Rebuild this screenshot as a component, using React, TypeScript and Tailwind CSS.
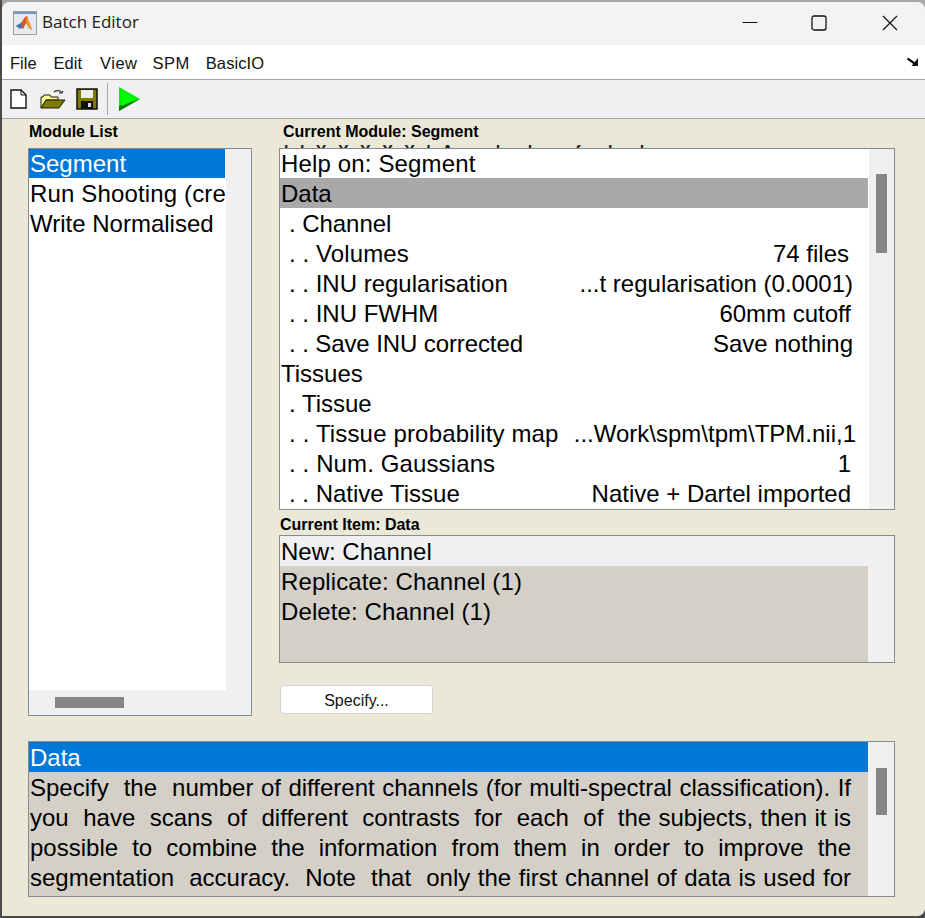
const font = 'font-["Liberation_Sans",Arial,sans-serif]'

const rows = [
  { label: '. Channel', indent: 'pl-[9px]', track: 'tracking-[-0.05px]' },
  { label: '. . Volumes', value: '74 files', pad: 'pr-[19px]', indent: 'pl-[9px]', track: 'tracking-[0.1px]' },
  { label: '. . INU regularisation', value: '...t regularisation (0.0001)', pad: 'pr-[15px]', indent: 'pl-[9px]', track: '' },
  { label: '. . INU FWHM', value: '60mm cutoff', pad: 'pr-[17px]', indent: 'pl-[9px]', track: '' },
  { label: '. . Save INU corrected', value: 'Save nothing', pad: 'pr-[15px]', indent: 'pl-[9px]', track: 'tracking-[-0.1px]' },
  { label: 'Tissues', indent: 'pl-[1px]', track: '' },
  { label: '. Tissue', indent: 'pl-[9px]', track: '' },
  { label: '. . Tissue probability map', value: '...Work\\spm\\tpm\\TPM.nii,1', pad: 'pr-[12px]', indent: 'pl-[9px]', track: 'tracking-[0.16px]' },
  { label: '. . Num. Gaussians', value: '1', pad: 'pr-[17px]', indent: 'pl-[9px]', track: 'tracking-[0.12px]' },
  { label: '. . Native Tissue', value: 'Native + Dartel imported', pad: 'pr-[17px]', indent: 'pl-[9px]', track: '' },
]

// the uneven gaps come from the justified text in the original control
const helpLines = [
  'Specify\u00a0 the\u00a0 number of different channels (for multi-spectral classification). If',
  'you\u00a0 have\u00a0 scans\u00a0 of\u00a0 different\u00a0 contrasts\u00a0 for\u00a0 each\u00a0 of\u00a0 the subjects, then it is',
  'possible to combine the information from them in order to improve the',
  'segmentation\u00a0 accuracy.\u00a0 Note\u00a0 that\u00a0 only the first channel of data is used for',
]

function MatlabLogo() {
  return (
    <svg width="24" height="24" viewBox="0 0 24 24">
      <rect x="0.5" y="0.5" width="23" height="23" fill="#e4eaf0" stroke="#a0a0a0" />
      <rect x="1" y="1" width="22" height="2" fill="#6f97bd" />
      <path d="M3 15l5-3 4-6 2-1 5 14-3-2-3-5-3 6z" fill="#d8561c" />
      <path d="M3 15l5-3 2 2-3 4z" fill="#3f77b5" />
      <path d="M14 5l5 14-3-2-3-6z" fill="#f29a2c" />
    </svg>
  )
}

export default function App() {
  return (
    <div className={`${font} w-[925px] h-[918px] bg-[#4a4a4a] overflow-hidden text-black`}>
      <div className="h-[916px] w-[923px] ml-[2px] pt-[2px] bg-[#a8a8a8] rounded-br-[8px]">
        <div className="h-[914px] rounded-t-[8px] rounded-br-[8px] overflow-hidden flex flex-col bg-[#ebe8d8]">
          {/* title bar */}
          <div className="h-[43px] shrink-0 bg-[#f3f3f3] flex items-center pl-[11px] pb-[2px]">
            <MatlabLogo />
            <span className='ml-[5px] mb-[2px] text-[17px] text-[#1a1a1a] font-["Open_Sans",sans-serif]'>Batch Editor</span>
            <div className="ml-auto flex items-center">
              <svg width="16" height="16" viewBox="0 0 16 16" className="mr-[53px]">
                <path d="M0.5 7.5h15" stroke="#111" strokeWidth="1" />
              </svg>
              <svg width="16" height="16" viewBox="0 0 16 16" className="mr-[55px]">
                <rect x="1" y="1" width="14" height="14" rx="2" fill="none" stroke="#111" strokeWidth="1.3" />
              </svg>
              <svg width="16" height="16" viewBox="0 0 16 16" className="mr-[27px]">
                <path d="M1 1l14 14M15 1L1 15" stroke="#111" strokeWidth="1.2" />
              </svg>
            </div>
          </div>

          {/* menu bar */}
          <div className="h-[35px] shrink-0 bg-white border-b border-[#a3a3a3] flex items-center pl-[8px] pr-[6px] pt-[3px] text-[16.5px] text-[#111]">
            <span className="mr-[17px]">File</span>
            <span className="mr-[18px]">Edit</span>
            <span className="mr-[15px] tracking-[0.5px]">View</span>
            <span className="mr-[16px] tracking-[0.5px]">SPM</span>
            <span className="tracking-[0.1px]">BasicIO</span>
            <svg width="12" height="10" viewBox="0 0 12 10" className="ml-auto mb-[4px]">
              <path d="M0.5 1.5l7 5" stroke="#111" strokeWidth="2.2" fill="none" />
              <path d="M11 1v8H4.500z" fill="#111" />
            </svg>
          </div>

          {/* toolbar */}
          <div className="h-[39px] shrink-0 bg-[#f0f0f0] border-b border-[#a3a3a3] flex items-center pl-[7px]">
            <svg width="20" height="22" viewBox="0 0 20 22">
              <path d="M2 2h10l5 5v13H2z" fill="#fff" stroke="#111" strokeWidth="1.4" />
              <path d="M12 2v5h5" fill="none" stroke="#111" strokeWidth="1" />
            </svg>
            <svg width="26" height="22" viewBox="0 0 26 22" className="ml-[11px]">
              <path d="M1 20V9h2l1-2h6l1 2h7v3H6z" fill="#ffff99" stroke="#1f1f00" strokeWidth="1" />
              <path d="M1 20l5-8h19l-6 8z" fill="#7f7a00" stroke="#1f1f00" strokeWidth="1" />
              <path d="M14 4c3-2 6-2 8 1M22 5l1-2M22 5l-3 0" fill="none" stroke="#333" strokeWidth="1.2" />
            </svg>
            <svg width="22" height="22" viewBox="0 0 22 22" className="ml-[10px]">
              <rect x="1" y="1" width="20" height="20" fill="#7f7a00" stroke="#111" strokeWidth="1.5" />
              <rect x="5" y="2" width="12" height="8" fill="#efefef" />
              <rect x="5" y="13" width="12" height="8" fill="#111" />
              <rect x="12" y="15" width="3" height="4" fill="#ddd" />
            </svg>
            <div className="w-px h-[32px] bg-[#a8a8a8] ml-[9px]" />
            <svg width="24" height="26" viewBox="0 0 24 26" className="ml-[10px]">
              <path d="M1 1l21 12L1 25z" fill="#00ee00" />
              <path d="M1 25l21-12L1 20z" fill="#0a7a0a" />
              <path d="M4 5l14 8L4 20z" fill="#00ff00" />
            </svg>
          </div>

          {/* body */}
          <div className="flex-1 pl-[26px] flex flex-col">
            <div className="flex">
              {/* module list */}
              <div className="w-[224px] shrink-0">
                <div className="h-[29px] pt-[4px] text-[16px] font-bold leading-[18px] pl-px">Module List</div>
                <div className="h-[568px] border border-[#878a93] bg-[#f0f0f0] flex flex-col">
                  <div className="w-[197px] h-[541px] bg-white text-[24px] leading-[32px] shrink-0">
                    <div className="w-[196px] pl-px bg-[#0078d7] text-white h-[29px] leading-[30px]">Segment</div>
                    <div className="h-[30px] pl-px whitespace-nowrap overflow-hidden tracking-[0.15px]">Run Shooting (cre</div>
                    <div className="h-[30px] pl-px whitespace-nowrap overflow-hidden">Write Normalised</div>
                  </div>
                  <div className="pt-[7px] pl-[26px]">
                    <div className="w-[69px] h-[11px] bg-[#868686]" />
                  </div>
                </div>
              </div>

              {/* current module + item */}
              <div className="w-[616px] ml-[27px] shrink-0">
                <div className="h-[29px] pt-[4px] text-[16px] font-bold leading-[18px] pl-[4px] relative overflow-hidden">
                  Current Module: Segment
                  <span className="absolute left-[5px] top-[24px] text-[16px] font-bold tracking-[3.5px] leading-[18px] whitespace-nowrap text-[#222]">{"l l X X X X X l A . . l . l . . f . l . l"}</span>
                </div>
                <div className="h-[362px] border border-[#878a93] bg-white flex text-[24px] leading-[32px] overflow-hidden">
                  <div className="flex-1 min-w-0 overflow-hidden pr-px">
                    <div className="h-[29px] pl-px leading-[30px] tracking-[0.15px]">Help on: Segment</div>
                    <div className="h-[30px] pl-px bg-[#a9a9a9]">Data</div>
                    {rows.map(r => (
                      <div key={r.label} className={`h-[30px] flex justify-between whitespace-nowrap ${r.indent} ${r.pad ?? ''}`}>
                        <span className={r.track}>{r.label}</span>
                        {r.value && <span>{r.value}</span>}
                      </div>
                    ))}
                  </div>
                  <div className="w-[25px] shrink-0 bg-[#f0f0f0] pl-[7px] pt-[25px]">
                    <div className="w-[11px] h-[79px] bg-[#868686]" />
                  </div>
                </div>

                <div className="h-[25px] pt-[6px] text-[16px] font-bold leading-[18px] pl-px">Current Item: Data</div>
                <div className="h-[128px] border border-[#878a93] bg-[#f0f0f0] flex text-[24px] leading-[32px]">
                  <div className="flex-1 flex flex-col">
                    <div className="h-[30px] pl-px bg-[#f0f0f0]">New: Channel</div>
                    <div className="flex-1 bg-[#d4d0c8]">
                      <div className="h-[30px] pl-px tracking-[0.1px]">Replicate: Channel (1)</div>
                      <div className="h-[30px] pl-px tracking-[0.1px]">Delete: Channel (1)</div>
                    </div>
                  </div>
                  <div className="w-[26px] shrink-0 bg-[#f0f0f0]" />
                </div>

                <button className="mt-[22px] ml-px w-[153px] h-[29px] bg-white border border-[#d4d4d4] rounded-[3px] text-[16px] text-[#111] leading-[30px] block">
                  Specify...
                </button>
              </div>
            </div>

            {/* help text */}
            <div className="mt-[25px] w-[867px] h-[156px] border border-[#878a93] flex text-[24px] leading-[32px] bg-[#d4d0c8]">
              <div className="flex-1 min-w-0 overflow-hidden">
                <div className="h-[30px] pl-[1px] bg-[#0078d7] text-white">Data</div>
                {helpLines.map(line => (
                  <div key={line} className="h-[30px] pl-[1px] pr-[17px] text-justify [text-align-last:justify] whitespace-normal">{line}</div>
                ))}
              </div>
              <div className="w-[26px] shrink-0 bg-[#f0f0f0] pl-[8px] pt-[26px]">
                <div className="w-[11px] h-[47px] bg-[#868686]" />
              </div>
            </div>
          </div>
        </div>
      </div>
    </div>
  )
}
